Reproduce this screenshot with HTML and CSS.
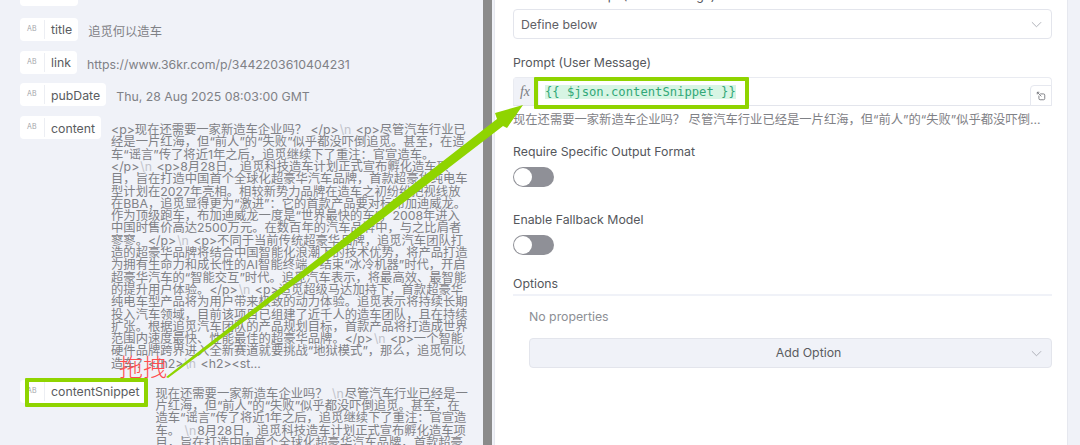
FILE: index.html
```html
<!DOCTYPE html>
<html lang="zh-CN">
<head>
<meta charset="utf-8">
<title>Prompt mapping</title>
<link rel="stylesheet" href="styles.css">
</head>
<body>
<div class="page">
  <section class="inputs">
    <div class="pill stub"></div>
    <div class="row">
      <div class="pill"><span class="ab">AB</span><span class="key">title</span></div>
      <div class="value">追觅何以造车</div>
    </div>
    <div class="row">
      <div class="pill"><span class="ab">AB</span><span class="key">link</span></div>
      <div class="value">https://www.36kr.com/p/3442203610404231</div>
    </div>
    <div class="row">
      <div class="pill"><span class="ab">AB</span><span class="key">pubDate</span></div>
      <div class="value">Thu, 28 Aug 2025 08:03:00 GMT</div>
    </div>
    <div class="row">
      <div class="pill"><span class="ab">AB</span><span class="key">content</span></div>
      <div class="value">&lt;p&gt;现在还需要一家新造车企业吗？ &lt;/p&gt;<i>\n</i> &lt;p&gt;尽管汽车行业已<br>经是一片红海，但“前人”的“失败”似乎都没吓倒追觅。甚至，在造<br>车“谣言”传了将近1年之后，追觅继续下了重注：官宣造车。<br>&lt;/p&gt;<i>\n</i> &lt;p&gt;8月28日，追觅科技造车计划正式宣布孵化造车项<br>目，旨在打造中国首个全球化超豪华汽车品牌，首款超豪华纯电车<br>型计划在2027年亮相。相较新势力品牌在造车之初纷纷把视线放<br>在BBA，追觅显得更为“激进”：它的首款产品要对标布加迪威龙。<br>作为顶级跑车，布加迪威龙一度是“世界最快的车”，2008年进入<br>中国时售价高达2500万元。在数百年的汽车品牌中，与之比肩者<br>寥寥。&lt;/p&gt;<i>\n</i> &lt;p&gt;不同于当前传统超豪华品牌，追觅汽车团队打<br>造的超豪华品牌将结合中国智能化浪潮下的技术优势，将产品打造<br>为拥有生命力和成长性的AI智能终端，结束“冰冷机器”时代，开启<br>超豪华汽车的“智能交互”时代。追觅汽车表示，将最高效、最智能<br>的提升用户体验。&lt;/p&gt;<i>\n</i> &lt;p&gt;追觅超级马达加持下，首款超豪华<br>纯电车型产品将为用户带来极致的动力体验。追觅表示将持续长期<br>投入汽车领域，目前该项目已组建了近千人的造车团队，且在持续<br>扩张。根据追觅汽车团队的产品规划目标，首款产品将打造成世界<br>范围内速度最快、性能最佳的超豪华品牌。&lt;/p&gt;<i>\n</i> &lt;p&gt;一个智能<br>硬件品牌跨界进入全新赛道就要挑战“地狱模式”，那么，追觅何以<br>造车？&lt;/h2&gt;<i>\n</i> &lt;h2&gt;&lt;st...</div>
    </div>
    <div class="row">
      <div class="pill"><span class="ab">AB</span><span class="key">contentSnippet</span></div>
      <div class="value">现在还需要一家新造车企业吗？ <i>\n</i>尽管汽车行业已经是一<br>片红海，但“前人”的“失败”似乎都没吓倒追觅。甚至，在<br>造车“谣言”传了将近1年之后，追觅继续下了重注：官宣造<br>车。 <i>\n</i>8月28日，追觅科技造车计划正式宣布孵化造车项<br>目，旨在打造中国首个全球化超豪华汽车品牌，首款超豪</div>
    </div>
  </section>
  <div class="divider"></div>
  <section class="panel">
    <div class="label clipped">Source for Prompt (User Message)</div>
    <div class="select">
      <span>Define below</span>
      <svg class="chev" viewBox="0 0 12 7" width="11" height="7"><path d="M1 1l5 5 5-5"/></svg>
    </div>
    <div class="label prompt-label">Prompt (User Message)</div>
    <div class="input">
      <span class="fx">fx</span>
      <span class="code"><mark>{{ $json.contentSnippet }}</mark></span>
      <span class="expand"><svg viewBox="0 0 12 12" width="10" height="10"><path d="M1.5 4V1.500H4M1.5 1.500L6.500 6.500M5 3.500h4a1.500 1.500 0 0 1 1.500 1.500v4A1.500 1.500 0 0 1 9 10.500H5A1.500 1.500 0 0 1 3.500 9V5.500"/></svg></span>
    </div>
    <div class="hint">现在还需要一家新造车企业吗？ 尽管汽车行业已经是一片红海，但“前人”的“失败”似乎都没吓倒...</div>
    <div class="label switch-label first">Require Specific Output Format</div>
    <div class="toggle"><span class="knob"></span></div>
    <div class="label switch-label">Enable Fallback Model</div>
    <div class="toggle"><span class="knob"></span></div>
    <div class="label options">Options</div>
    <div class="options-body">
      <div class="empty">No properties</div>
      <div class="add">
        <span>Add Option</span>
        <svg class="chev" viewBox="0 0 12 7" width="11" height="7"><path d="M1 1l5 5 5-5"/></svg>
      </div>
    </div>
  </section>
  <div class="gutter"></div>

  <div class="hl hl-field"></div>
  <div class="hl hl-prompt"></div>
  <svg class="arrow" viewBox="0 0 1080 445" width="1080" height="445">
    <polygon points="166,377 497,119 495,113 523,105 507,128 503,126 381,220 168,378"/>
  </svg>
  <div class="drag">拖拽</div>
</div>
</body>
</html>
```

FILE: styles.css
```css
* { box-sizing: border-box; }
html, body { margin: 0; padding: 0; }
body {
  width: 1080px;
  height: 445px;
  overflow: hidden;
  background: #f0f2f8;
  font-family: "Inter", "Noto Sans CJK SC", sans-serif;
  font-size: 12.3px;
  color: #555;
}
.page {
  position: relative;
  display: flex;
  width: 1080px;
  height: 445px;
  overflow: hidden;
}

/* left column: mapped input fields */
.inputs {
  width: 483px;
  flex: none;
  padding-left: 20px;
  display: flex;
  flex-direction: column;
  gap: 9.7px;
  background: #f0f2f8;
}
.row {
  display: flex;
  align-items: flex-start;
  gap: 10px;
}
.pill {
  flex: none;
  display: flex;
  align-items: center;
  height: 23px;
  background: #fff;
  border-radius: 4px;
  padding-right: 6px;
}
.stub {
  width: 58px;
  height: 14px;
  margin-top: -8px;
  margin-bottom: 2.3px;
}
.ab {
  width: 25px;
  height: 19px;
  line-height: 18px;
  text-align: center;
  font-size: 7px;
  letter-spacing: 0.2px;
  color: #a3a5aa;
  border-right: 1px solid #eceef3;
  flex: none;
}
.key {
  padding: 1px 0 0 6px;
  font-size: 12.3px;
  color: #5a5c60;
}
.value {
  width: 358px;
  margin-top: 8px;
  font-size: 12.3px;
  line-height: 12.3px;
  color: #7f8186;
  white-space: nowrap;
}
.value i {
  font-style: normal;
  padding: 0 1px;
  color: #c2c4cb;
}

.divider {
  width: 9px;
  flex: none;
  background: #8b8b8b;
}
.gutter { flex: 1; }

/* right column: node parameters */
.panel {
  width: 574px;
  flex: none;
  margin-left: 2px;
  padding: 0 15px 0 18px;
  background: #fff;
  border-left: 1px solid #e6e8ef;
  border-right: 1px solid #e6e8ef;
}
.label {
  height: 15px;
  line-height: 15px;
  font-size: 12.3px;
  color: #55575c;
}
.clipped { margin-top: -12px; }
.select {
  display: flex;
  align-items: center;
  justify-content: space-between;
  height: 30px;
  margin-top: 6px;
  padding: 0 9px 0 7px;
  border: 1px solid #e3e5ec;
  border-radius: 4px;
  color: #5f6166;
}
.chev {
  fill: none;
  stroke: #a9abb2;
  stroke-width: 1;
}
.prompt-label { margin-top: 15.5px; }
.input {
  position: relative;
  display: flex;
  align-items: flex-start;
  height: 29px;
  margin-top: 7.5px;
  border: 1px solid #e9ebf1;
  border-bottom-color: #e3e5ec;
  border-radius: 4px 4px 0 0;
}
.fx {
  flex: none;
  width: 25px;
  height: 100%;
  padding-right: 3px;
  background: #f0f2f8;
  text-align: center;
  line-height: 27px;
  font-family: "Liberation Serif", serif;
  font-style: italic;
  font-size: 14px;
  color: #7a7c82;
}
.code {
  padding: 7px 0 0 6px;
  font-family: "DejaVu Sans Mono", monospace;
  font-size: 12.2px;
  line-height: 14px;
}
.code mark {
  display: inline-block;
  background: #d7f5e4;
  color: #31a878;
}
.expand {
  position: absolute;
  right: -1px;
  bottom: -1px;
  display: flex;
  align-items: center;
  justify-content: center;
  width: 22px;
  height: 21px;
  background: #fff;
  border: 1px solid #e6e8ef;
  border-radius: 4px 0 0 0;
}
.expand svg {
  fill: none;
  stroke: #6a6c72;
  stroke-width: 1;
}
.hint {
  height: 15px;
  margin-top: 6px;
  line-height: 15px;
  color: #7f8186;
  white-space: nowrap;
}
.switch-label { margin-top: 24.5px; }
.switch-label.first { margin-top: 16.5px; }
.toggle {
  display: flex;
  align-items: center;
  width: 41px;
  height: 20px;
  margin-top: 8.5px;
  padding-left: 1px;
  border-radius: 10px;
  background: #8f9097;
}
.knob {
  width: 18px;
  height: 18px;
  border-radius: 50%;
  background: #fff;
}
.options {
  height: 20.5px;
  margin-top: 20.5px;
  border-bottom: 2px solid #f0f2f8;
}
.options-body { padding-left: 16px; }
.empty {
  height: 15px;
  margin-top: 13px;
  line-height: 15px;
  color: #8d8f95;
}
.add {
  position: relative;
  display: flex;
  align-items: center;
  justify-content: center;
  height: 30px;
  margin-top: 13.5px;
  padding-left: 36px;
  background: #f0f2f8;
  border: 1px solid #e3e5ec;
  border-radius: 4px;
  color: #5a5c60;
  font-size: 12.3px;
}
.add .chev {
  position: absolute;
  right: 9px;
  top: 11px;
}

/* tutorial annotations drawn over the screenshot */
.hl {
  position: absolute;
  border: 4px solid #8fd400;
  border-radius: 1px;
}
.hl-field { left: 25px; top: 378px; width: 123px; height: 29px; }
.hl-prompt { left: 534px; top: 77px; width: 215px; height: 32px; }
.arrow {
  position: absolute;
  left: 0;
  top: 0;
  fill: #8fd400;
}
.drag {
  position: absolute;
  left: 119px;
  top: 348px;
  font-family: "Noto Sans CJK SC", sans-serif;
  font-weight: 300;
  font-size: 24px;
  line-height: 36px;
  color: #ff4d4f;
}
```
